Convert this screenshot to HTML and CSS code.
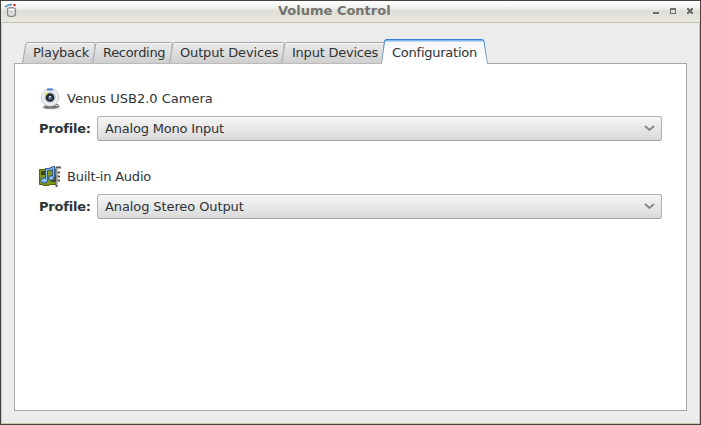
FILE: index.html
```
<!DOCTYPE html>
<html lang="en">
<head>
<meta charset="utf-8">
<title>Volume Control</title>
<link rel="stylesheet" href="styles.css">
</head>
<body>
<div class="window">
  <header class="titlebar">
    <svg class="app-icon" width="14" height="16" viewBox="0 0 14 16">
      <path d="M1 4Q4 1.500 8 1.500" fill="none" stroke="#6b9acb" stroke-width="1.800"/>
      <path d="M9.500 1h2v2h-2z" fill="#d80909"/>
      <path d="M3.500 6.500Q3.500 4.500 7.500 4.500T11.500 6.500V11.500Q11 13.500 7.500 13.500T3.500 11.500Z" fill="#dcdcda" stroke="#858585" stroke-width="1.200"/>
      <ellipse cx="7.500" cy="6.700" rx="3.500" ry="1.500" fill="#fff" stroke="#aaa" stroke-width=".7"/>
    </svg>
    <h1>Volume Control</h1>
    <svg class="controls" width="40" height="8" viewBox="0 0 40 8" fill="#6d6d69">
      <path d="M0 4h6v2H0z"/>
      <path fill-rule="evenodd" d="M17 0h6v6h-6zM18 2v3h4V2z"/>
      <path d="M34 0h2v1h2V0h2v2h-1v2h1v2h-2V5h-2v1h-2V4h1V2h-1z"/>
    </svg>
  </header>
  <main>
    <nav class="tabs">
      <a class="tab playback"><svg width="75" height="25"><path class="face" d="M.5 24.500L3.800 5Q4.200 3.500 6 3.500H73V24.500"/><path class="shine" d="M5 4.500H73"/></svg><span>Playback</span></a>
      <a class="tab recording"><svg width="82" height="25"><path class="face" d="M.5 24.500L3.800 5Q4.200 3.500 6 3.500H80V24.500"/><path class="shine" d="M5 4.500H80"/></svg><span>Recording</span></a>
      <a class="tab output"><svg width="117" height="25"><path class="face" d="M.5 24.500L3.800 5Q4.200 3.500 6 3.500H115V24.500"/><path class="shine" d="M5 4.500H115"/></svg><span>Output Devices</span></a>
      <a class="tab input"><svg width="104" height="25"><path class="face" d="M.5 24.500L3.800 5Q4.200 3.500 6 3.500H103V24.500"/><path class="shine" d="M5 4.500H103"/></svg><span>Input Devices</span></a>
      <a class="tab config"><svg width="107" height="25"><path class="selected" d="M.5 25L3.500 2.500Q4 .5 6 .5H100.500Q102.500 .5 103 2.500L106.500 25"/><path class="accent" d="M4.500 1.500H102"/><path class="accent-edge" d="M3.500 2.500Q4 .5 6 .5H100.500Q102.500 .5 103 2.500"/></svg><span>Configuration</span></a>
    </nav>
    <svg class="defs" width="0" height="0"><defs>
      <linearGradient id="tabfill" x2="0" y2="1"><stop stop-color="#ebebeb"/><stop offset="1" stop-color="#cecece"/></linearGradient>
      <linearGradient id="activefill" x2="0" y2="1"><stop stop-color="#f7f7f7"/><stop offset="1" stop-color="#fff"/></linearGradient>
      <linearGradient id="edge" x2="0" y2="1"><stop stop-color="#3584d8"/><stop offset="1" stop-color="#a5adb5"/></linearGradient>
    </defs></svg>
    <section class="panel">
      <article class="device">
        <div class="name">
          <svg width="22" height="22" viewBox="0 0 22 22">
            <ellipse cx="12" cy="19.300" rx="9" ry="2" fill="#b5b6b3"/>
            <path d="M5 17.500h12l2 1.500-3 1.500H6z" fill="#747571"/>
            <path d="M16 16q4 0 4 2.500H8" fill="none" stroke="#6c6d6a"/>
            <circle cx="11" cy="9.500" r="8.700" fill="#f0f2f4" stroke="#b5b8bb" stroke-width=".8"/>
            <path d="M8 .5h6v2H8z" fill="#4985cb"/>
            <circle cx="11" cy="9.500" r="6" fill="#ccd0d6"/>
            <circle cx="11" cy="9.500" r="4.300" fill="#252a32"/>
            <circle cx="11" cy="10" r="1.800" fill="#6a84ad"/>
            <path d="M10 8h2v1h-2z" fill="#eef"/>
            <path d="M6 5h2v2H6z" fill="#e6df16"/>
          </svg>
          <span>Venus USB2.0 Camera</span>
        </div>
        <div class="profile"><b>Profile:</b><button><span class="mono">Analog Mono Input</span><svg width="11" height="7"><path d="M1 1l4.500 4L10 1"/></svg></button></div>
      </article>
      <article class="device">
        <div class="name">
          <svg width="22" height="22" viewBox="0 0 22 22">
            <path d="M.5 3.500h17v15H10v1H4v-1H.500z" fill="#819719" stroke="#56620f"/>
            <path d="M2 5h4v4H2zM12 9h5v7h-5z" fill="#3b4420"/>
            <path d="M13 10h2v4h-2z" fill="#98aa2b"/>
            <path d="M17.500 1v20M17 1.500h5M18 6.500h3M18 10.500h3M18 14.500h3" fill="none" stroke="#555753" stroke-width="2"/>
            <path d="M18 2v17" stroke="#d3d7cf"/>
            <path d="M7.500 14V3.500q4 .5 7-2V11" fill="none" stroke="#254f83" stroke-width="3"/>
            <ellipse cx="5.200" cy="14.500" rx="3.500" ry="2.600" fill="#8abbf0" stroke="#254f83"/>
            <ellipse cx="12.300" cy="12" rx="2.800" ry="2.200" fill="#8abbf0" stroke="#254f83"/>
            <path d="M7.500 14V3.500q4 .5 7-2V11" fill="none" stroke="#8abbf0" stroke-width="1.300"/>
          </svg>
          <span class="builtin">Built-in Audio</span>
        </div>
        <div class="profile"><b>Profile:</b><button><span class="stereo">Analog Stereo Output</span><svg width="11" height="7"><path d="M1 1l4.500 4L10 1"/></svg></button></div>
      </article>
    </section>
  </main>
</div>
</body>
</html>
```

FILE: styles.css
```
* { box-sizing: border-box; }
body { margin: 0; font: 13px/16px "DejaVu Sans", sans-serif; color: #2e3436; overflow: hidden; }
.window { width: 701px; height: 425px; border: 1px solid #45433f; background: #ececec; display: flex; flex-direction: column; }
.titlebar { height: 22px; flex: none; display: flex; align-items: flex-start; background: linear-gradient(#fff 0, #f2f2ef 30%, #deded6 50%, #e9e9e2 100%); border-bottom: 1px solid #c8c4ae; padding: 0 7px 0 3px; }
.titlebar h1 { margin: 2px 0 0 260px; font-size: 13px; line-height: 16px; font-weight: bold; color: #73736f; }
.app-icon { margin-top: 2px; }
.controls { margin: 7px 0 0 auto; }
main { flex: 1; display: flex; flex-direction: column; padding: 16px 12px 12px; border: solid #c8c4ae; border-width: 0 1px 1px; }
.tabs { display: flex; height: 25px; padding-left: 8px; flex: none; position: relative; z-index: 1; }
.tab { display: grid; height: 25px; }
.tab svg, .tab span { grid-area: 1 / 1; }
.tab svg { overflow: visible; }
.tab span { padding: 6px 0 0 11px; white-space: nowrap; }
.playback { width: 70px; letter-spacing: -.25px; }
.recording { width: 77px; letter-spacing: -.3px; }
.output { width: 112px; letter-spacing: -.15px; }
.input { width: 100px; letter-spacing: -.23px; }
.config { width: 107px; letter-spacing: -.24px; }
.face { fill: url(#tabfill); stroke: #a7a7a7; }
.shine { stroke: #f7f7f7; }
.selected { fill: url(#activefill); stroke: url(#edge); }
.accent { stroke: #86b9ee; stroke-width: 2; }
.accent-edge { fill: none; stroke: #3584d8; }
.defs { position: absolute; }
.panel { flex: 1; margin-top: -1px; background: #fff; border: 1px solid #a7a7a7; padding: 24px; }
.device { height: 78px; }
.name { display: flex; align-items: center; height: 22px; gap: 6px; }
.builtin { letter-spacing: -.22px; }
.profile { display: flex; align-items: center; margin-top: 6px; height: 25px; }
.profile b { width: 58px; flex: none; letter-spacing: -.2px; }
button { flex: 1; height: 25px; display: flex; justify-content: space-between; align-items: center; padding: 0 6px 0 7px; font: inherit; color: inherit; text-align: left; border: 1px solid #b0b0b0; border-bottom-color: #a2a2a2; border-radius: 3px; background: linear-gradient(#f5f5f5, #dadada); box-shadow: inset 0 1px #fafafa; }
button svg { fill: none; stroke: #888; stroke-width: 2; }
.mono { letter-spacing: -.19px; }
.stereo { letter-spacing: -.1px; }
```
